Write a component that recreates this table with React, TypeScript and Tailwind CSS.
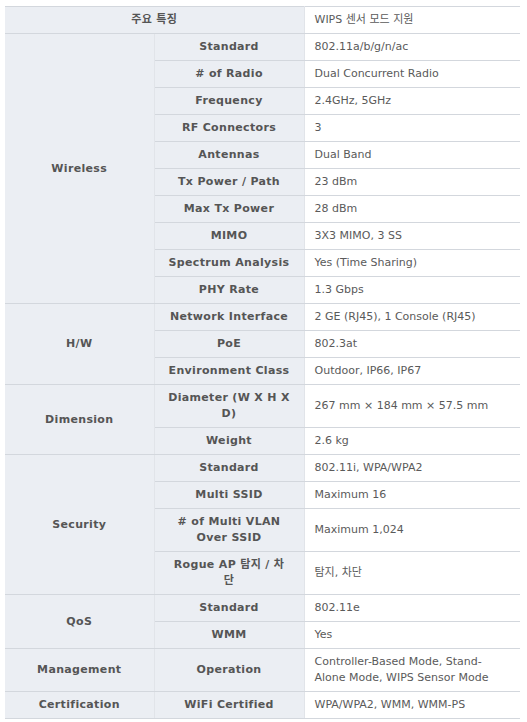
import type { ReactNode } from "react";

type Row = { label: ReactNode; key: string; value: string };
type Group = { name: string; rows: Row[] };

const groups: Group[] = [
  {
    name: "Wireless",
    rows: [
      { key: "std", label: "Standard", value: "802.11a/b/g/n/ac" },
      { key: "radio", label: "# of Radio", value: "Dual Concurrent Radio" },
      { key: "freq", label: "Frequency", value: "2.4GHz, 5GHz" },
      { key: "rf", label: "RF Connectors", value: "3" },
      { key: "ant", label: "Antennas", value: "Dual Band" },
      { key: "tx", label: "Tx Power / Path", value: "23 dBm" },
      { key: "maxtx", label: "Max Tx Power", value: "28 dBm" },
      { key: "mimo", label: "MIMO", value: "3X3 MIMO, 3 SS" },
      { key: "spec", label: "Spectrum Analysis", value: "Yes (Time Sharing)" },
      { key: "phy", label: "PHY Rate", value: "1.3 Gbps" },
    ],
  },
  {
    name: "H/W",
    rows: [
      { key: "net", label: "Network Interface", value: "2 GE (RJ45), 1 Console (RJ45)" },
      { key: "poe", label: "PoE", value: "802.3at" },
      { key: "env", label: "Environment Class", value: "Outdoor, IP66, IP67" },
    ],
  },
  {
    name: "Dimension",
    rows: [
      { key: "dia", label: "Diameter (W X H X D)", value: "267 mm × 184 mm × 57.5 mm" },
      { key: "wt", label: "Weight", value: "2.6 kg" },
    ],
  },
  {
    name: "Security",
    rows: [
      { key: "sstd", label: "Standard", value: "802.11i, WPA/WPA2" },
      { key: "ssid", label: "Multi SSID", value: "Maximum 16" },
      { key: "vlan", label: "# of Multi VLAN Over SSID", value: "Maximum 1,024" },
      {
        key: "rogue",
        label: (
          <>
            Rogue AP 탐지 / 차
            <br />단
          </>
        ),
        value: "탐지, 차단",
      },
    ],
  },
  {
    name: "QoS",
    rows: [
      { key: "qstd", label: "Standard", value: "802.11e" },
      { key: "wmm", label: "WMM", value: "Yes" },
    ],
  },
  {
    name: "Management",
    rows: [{ key: "op", label: "Operation", value: "Controller-Based Mode, Stand-Alone Mode, WIPS Sensor Mode" }],
  },
  {
    name: "Certification",
    rows: [{ key: "wifi", label: "WiFi Certified", value: "WPA/WPA2, WMM, WMM-PS" }],
  },
];

const labelCell =
  "border-b border-r border-[#d3d7dd] border-r-[#e1e4e9] bg-[#ebeef3] px-[10px] py-[5px] text-center align-middle font-bold tracking-[0.03em] text-[#555]";
const valueCell =
  "border-b border-[#d3d7dd] bg-white px-[10px] py-[5px] text-left align-middle text-[#5a5a5a]";

export default function App() {
  return (
    <div className="bg-white pl-[5px] pt-[6px]">
      <table
        className="w-[515px] table-fixed border-collapse border-t border-[#d3d7dd] text-[11px] leading-[16px]"
        style={{ fontFamily: '"DejaVu Sans", "Noto Sans CJK KR", sans-serif' }}
      >
        <colgroup>
          <col className="w-[149px]" />
          <col className="w-[150px]" />
          <col className="w-[216px]" />
        </colgroup>
        <tbody>
          <tr>
            <th colSpan={2} className={labelCell}>
              주요 특징
            </th>
            <td className={valueCell}>WIPS 센서 모드 지원</td>
          </tr>
          {groups.map((g) =>
            g.rows.map((r, i) => (
              <tr key={g.name + r.key}>
                {i === 0 ? (
                  <th rowSpan={g.rows.length} className={labelCell}>
                    {g.name}
                  </th>
                ) : null}
                <th className={labelCell}>{r.label}</th>
                <td className={valueCell}>{r.value}</td>
              </tr>
            )),
          )}
        </tbody>
      </table>
    </div>
  );
}
